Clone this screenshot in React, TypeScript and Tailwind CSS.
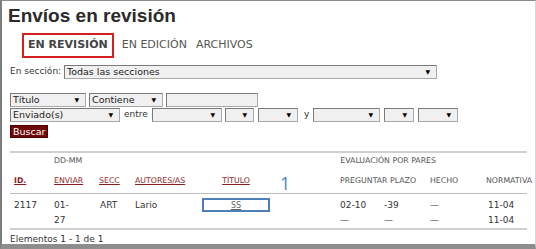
import React from 'react';

function Select({ label = '', width }: { label?: string; width: string }) {
  return (
    <div
      className={`${width} h-[14px] shrink-0 flex items-center justify-between bg-[#f0f0f0] border border-[#a9a9a9] border-t-[#7a7a7a] border-l-[#7a7a7a] pl-[2px] pr-[6px] text-[9.5px] leading-none text-[#222]`}
    >
      <span>{label}</span>
      <span className="text-[6px] text-black">▼</span>
    </div>
  );
}

export default function App() {
  return (
    <div
      className="w-[536px] h-[249px] overflow-hidden bg-white border-t border-t-[#8a8a8a] border-l-2 border-l-[#7d7d7d] border-r border-r-[#d6d6d6] border-b-[5px] border-b-[#8d8d8d] text-[#333]"
      style={{ fontFamily: '"DejaVu Sans", Verdana, sans-serif' }}
    >
      <h1
        className="pl-[6px] pt-[3px] text-[19px] font-bold leading-[24px] text-[#2b2b2b]"
        style={{ fontFamily: '"Liberation Sans", Arial, sans-serif' }}
      >
        Envíos en revisión
      </h1>

      <div className="flex items-center mt-[5px] ml-[20px] text-[11px] text-[#555] gap-[8px]">
        <div className="border-2 border-[#d42020] px-[4px] h-[25px] flex items-center font-bold text-[#444]">EN REVISIÓN</div>
        <div>EN EDICIÓN</div>
        <div className="ml-[1px]">ARCHIVOS</div>
      </div>

      <div className="flex items-center h-[14px] mt-[7px] ml-[8px] text-[9px] gap-[3px]">
        <span className="w-[51px] shrink-0 whitespace-nowrap">En sección:</span>
        <Select label="Todas las secciones" width="w-[373px]" />
      </div>

      <div className="mt-[14px] ml-[8px] flex flex-col gap-[1px]">
        <div className="flex items-center gap-[3px]">
          <Select label="Título" width="w-[76px]" />
          <Select label="Contiene" width="w-[74px]" />
          <div className="w-[92px] h-[14px] bg-[#f0f0f0] border border-[#a9a9a9] border-t-[#7a7a7a] border-l-[#7a7a7a]" />
        </div>
        <div className="flex items-center h-[14px] text-[9px]">
          <Select label="Enviado(s)" width="w-[110px]" />
          <span className="w-[32px] pl-[4px] shrink-0">entre</span>
          <Select width="w-[70px]" />
          <span className="w-[3px]" />
          <Select width="w-[29px]" />
          <span className="w-[4px]" />
          <Select width="w-[40px]" />
          <span className="w-[15px] pl-[6px] shrink-0">y</span>
          <Select width="w-[67px]" />
          <span className="w-[4px]" />
          <Select width="w-[30px]" />
          <span className="w-[4px]" />
          <Select width="w-[40px]" />
        </div>
        <div className="mt-[2px] flex">
          <button className="block bg-[#6e0a0a] text-white text-[9.5px] leading-none px-[2px] h-[13px] border border-[#4a0000]">Buscar</button>
        </div>
      </div>

      <div className="mt-[13px] mx-[8px] border-t-2 border-[#cfcfcf]" />

      <div className="mx-[8px] text-[7.8px] text-[#555]">
        <div className="flex h-[14px] items-end">
          <span className="ml-[44px]">DD-MM</span>
          <span className="ml-[258px]">EVALUACIÓN POR PARES</span>
        </div>
        <div className="flex items-center h-[26px] pt-[2px]">
          <span className="w-[44px] shrink-0 pl-[4px] font-bold underline text-[#8a1f1f]">ID.</span>
          <span className="w-[45px] shrink-0 underline text-[#8a1f1f]">ENVIAR</span>
          <span className="w-[36px] shrink-0 underline text-[#8a1f1f]">SECC</span>
          <span className="w-[67px] shrink-0 underline text-[#8a1f1f]">AUTORES/AS</span>
          <span className="w-[68px] shrink-0 text-center underline text-[#8a1f1f]">TÍTULO</span>
          <span className="w-[70px] shrink-0 pl-[10px] text-[18px] leading-none text-[#4a86c5] mt-[4px]" style={{ fontFamily: '"Open Sans", sans-serif' }}>1</span>
          <span className="w-[50px] shrink-0">PREGUNTAR</span>
          <span className="w-[40px] shrink-0">PLAZO</span>
          <span className="w-[56px] shrink-0">HECHO</span>
          <span>NORMATIVA</span>
        </div>
      </div>

      <div className="mx-[8px] border-t border-[#bdbdbd]" />

      <div className="mx-[8px] flex text-[9px] text-[#333] leading-[15px] pt-[4px]">
        <span className="w-[44px] shrink-0 pl-[4px]">2117</span>
        <span className="w-[45px] shrink-0">
          01-
          <br />
          27
        </span>
        <span className="w-[36px] shrink-0 pl-[1px]">ART</span>
        <span className="w-[67px] shrink-0">Lario</span>
        <div className="w-[68px] shrink-0 h-[14px] border-2 border-[#4f7fb8] flex items-center justify-center text-[8px] underline text-[#666]">SS</div>
        <span className="w-[70px] shrink-0" />
        <div className="flex flex-col">
          <div className="flex">
            <span className="w-[44px] shrink-0">02-10</span>
            <span className="w-[46px] shrink-0">-39</span>
            <span className="w-[58px] shrink-0">—</span>
            <span>11-04</span>
          </div>
          <div className="flex">
            <span className="w-[44px] shrink-0">—</span>
            <span className="w-[46px] shrink-0">—</span>
            <span className="w-[58px] shrink-0">—</span>
            <span>11-04</span>
          </div>
        </div>
      </div>

      <div className="mx-[8px] border-t-2 border-[#cfcfcf]" />

      <div className="ml-[8px] mt-[2px] text-[9px] leading-[14px] text-[#333]">Elementos 1 - 1 de 1</div>
    </div>
  );
}
